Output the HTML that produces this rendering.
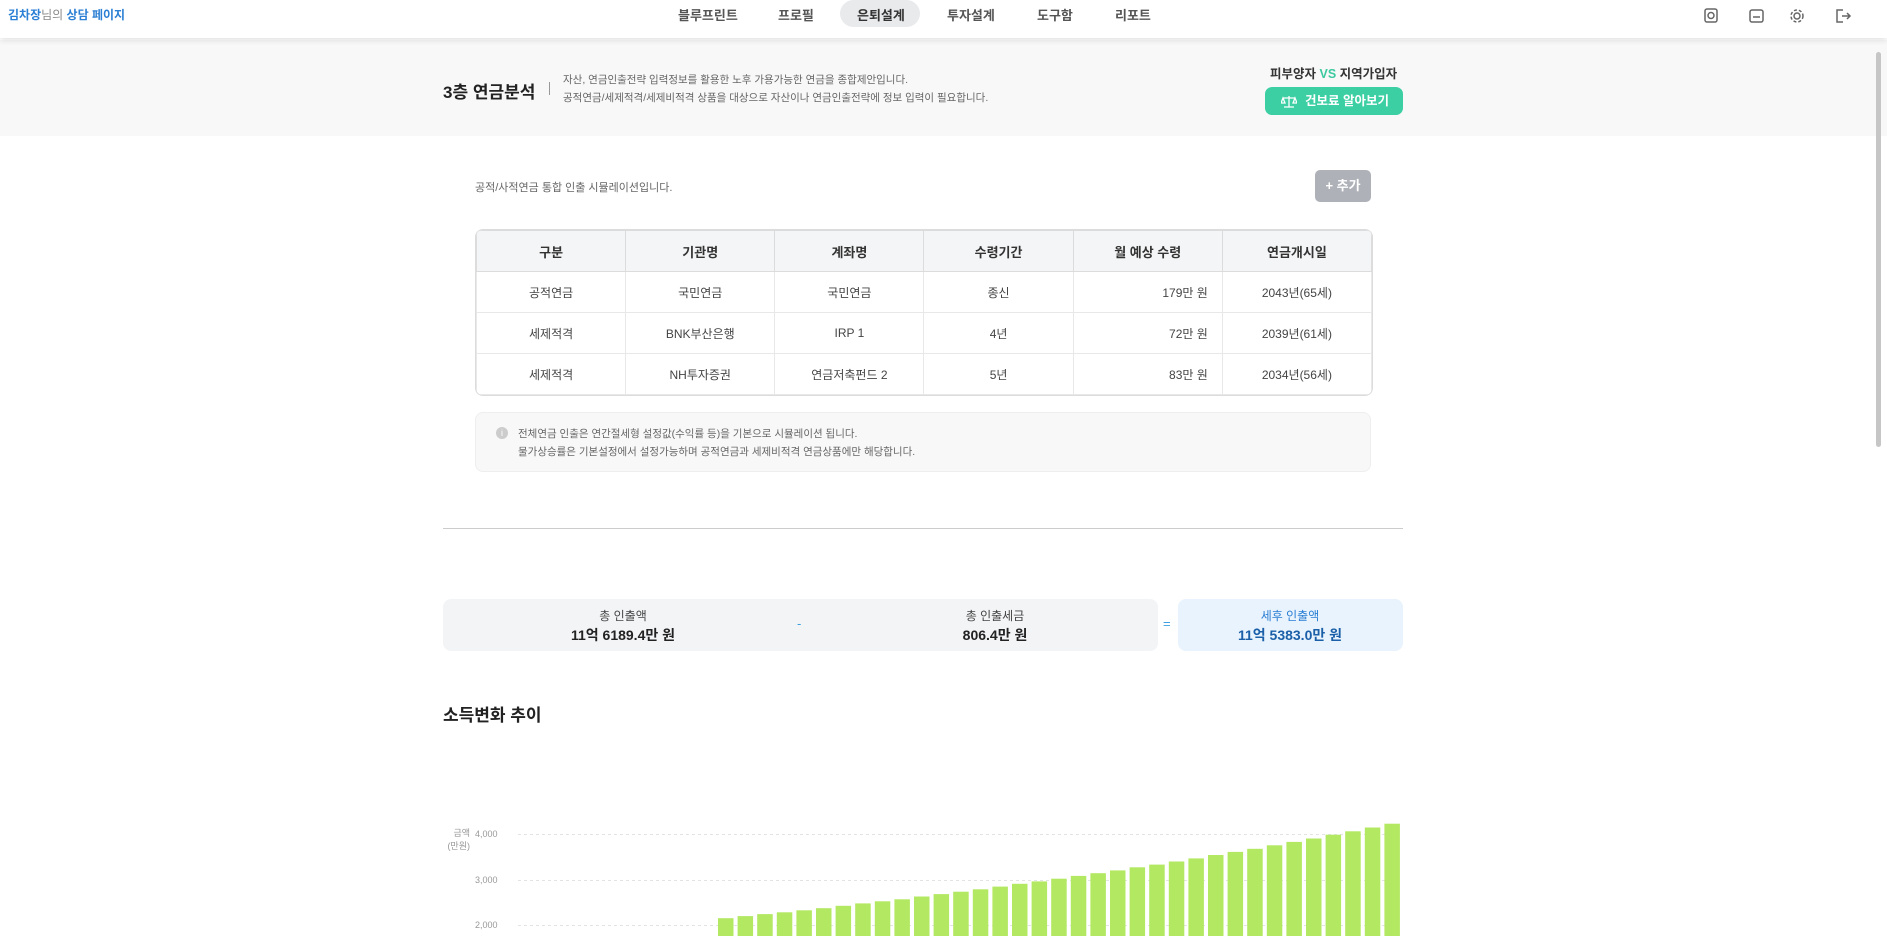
<!DOCTYPE html>
<html><head><meta charset="utf-8"><style>
*{box-sizing:border-box;margin:0;padding:0}
body{width:1887px;height:936px;overflow:hidden;background:#fff;font-family:"Liberation Sans","Noto Sans CJK KR",sans-serif;color:#333;position:relative}
.abs{position:absolute}
.hdr{left:0;top:0;width:1887px;height:38px;background:#fff;box-shadow:0 2px 6px rgba(0,0,0,.12);z-index:2}
.nav{font-size:13px;font-weight:bold;color:#555;top:5px}
.band{left:0;top:40px;width:1887px;height:96px;background:#f8f8f8}
table{border-collapse:collapse;width:896px;font-size:12px;color:#444;table-layout:fixed}
td,th{height:41px;text-align:center;border:1px solid #e8e8e8}
th{background:#f4f5f6;font-weight:bold;color:#333;font-size:13px;border-color:#dcdcdc}
td.r{text-align:right;padding-right:14px}
</style></head><body>
<div class="abs hdr">
 <div class="abs" style="left:8px;top:6px;font-size:12px;font-weight:bold;color:#2b7fd4">김차장<span style="font-weight:normal;color:#888">님의</span> 상담 페이지</div>
 <div class="abs nav" style="left:678px">블루프린트</div>
 <div class="abs nav" style="left:778px">프로필</div>
 <div class="abs" style="left:840px;top:0;width:80px;height:27px;background:#e9eaec;border-radius:14px"></div>
 <div class="abs nav" style="left:857px;color:#333">은퇴설계</div>
 <div class="abs nav" style="left:947px">투자설계</div>
 <div class="abs nav" style="left:1037px">도구함</div>
 <div class="abs nav" style="left:1115px">리포트</div>
 <svg class="abs" style="left:1703px;top:7px" width="150" height="18" fill="none" stroke="#666" stroke-width="1.5">
  <rect x="2" y="2" width="12" height="13" rx="2"/><circle cx="8" cy="8.5" r="3"/>
  <rect x="47" y="3" width="13" height="12" rx="2"/><path d="M50 10h7"/>
  <circle cx="94" cy="9" r="3"/><circle cx="94" cy="9" r="6" stroke-dasharray="3 2"/>
  <path d="M140 3h-6v12h6M139 9h8M144 6l3 3-3 3"/>
 </svg>
</div>
<div class="abs band"></div>
<div class="abs" style="left:443px;top:78px;font-size:17px;font-weight:bold;color:#222">3층 연금분석</div>
<div class="abs" style="left:549px;top:82px;width:1px;height:13px;background:#999"></div>
<div class="abs" style="left:563px;top:71px;font-size:10.5px;color:#666;line-height:18px">자산, 연금인출전략 입력정보를 활용한 노후 가용가능한 연금을 종합제안입니다.<br>공적연금/세제적격/세제비적격 상품을 대상으로 자산이나 연금인출전략에 정보 입력이 필요합니다.</div>
<div class="abs" style="left:1270px;top:63px;font-size:12.5px;font-weight:bold;color:#333">피부양자 <span style="color:#3cc9a0">VS</span> 지역가입자</div>
<div class="abs" style="left:1265px;top:87px;width:138px;height:28px;background:#3ccfa3;border-radius:7px;color:#fff;font-size:12.5px;font-weight:bold;line-height:28px;padding-left:40px">건보료 알아보기</div>
<svg class="abs" style="left:1281px;top:95px" width="16" height="13" fill="none" stroke="#fff" stroke-width="1.3"><path d="M8 1v11M3 12h10M2 3h12M2 3l-2 5h4zM14 3l-2 5h4z"/></svg>

<div class="abs" style="left:475px;top:179px;font-size:11px;color:#666">공적/사적연금 통합 인출 시뮬레이션입니다.</div>
<div class="abs" style="left:1315px;top:170px;width:56px;height:32px;background:#aeb1b7;border-radius:5px;color:#fff;font-size:13px;font-weight:bold;text-align:center;line-height:32px">+ 추가</div>

<div class="abs" style="left:475px;top:229px;border:1px solid #dcdcdc;border-radius:8px;overflow:hidden">
<table>
<tr><th>구분</th><th>기관명</th><th>계좌명</th><th>수령기간</th><th>월 예상 수령</th><th>연금개시일</th></tr>
<tr><td>공적연금</td><td>국민연금</td><td>국민연금</td><td>종신</td><td class="r">179만 원</td><td>2043년(65세)</td></tr>
<tr><td>세제적격</td><td>BNK부산은행</td><td>IRP 1</td><td>4년</td><td class="r">72만 원</td><td>2039년(61세)</td></tr>
<tr><td>세제적격</td><td>NH투자증권</td><td>연금저축펀드 2</td><td>5년</td><td class="r">83만 원</td><td>2034년(56세)</td></tr>
</table></div>

<div class="abs" style="left:475px;top:412px;width:896px;height:60px;background:#f8f8f8;border:1px solid #eee;border-radius:8px"></div>
<div class="abs" style="left:496px;top:427px;width:12px;height:12px;border-radius:50%;background:#ccc;color:#fff;font-size:9px;text-align:center;line-height:12px">i</div>
<div class="abs" style="left:518px;top:425px;font-size:10.5px;color:#666;line-height:18px">전체연금 인출은 연간절세형 설정값(수익률 등)을 기본으로 시뮬레이션 됩니다.<br>물가상승률은 기본설정에서 설정가능하며 공적연금과 세제비적격 연금상품에만 해당합니다.</div>

<div class="abs" style="left:443px;top:528px;width:960px;height:1px;background:#ccc"></div>

<div class="abs" style="left:443px;top:599px;width:715px;height:52px;background:#f3f4f6;border-radius:8px"></div>
<div class="abs" style="left:1178px;top:599px;width:225px;height:52px;background:#e8f3fd;border-radius:8px"></div>
<div class="abs" style="left:523px;top:607px;width:200px;text-align:center;font-size:12px;color:#444">총 인출액<br><b style="font-size:14px;color:#222;line-height:22px">11억 6189.4만 원</b></div>
<div class="abs" style="left:895px;top:607px;width:200px;text-align:center;font-size:12px;color:#444">총 인출세금<br><b style="font-size:14px;color:#222;line-height:22px">806.4만 원</b></div>
<div class="abs" style="left:1190px;top:607px;width:200px;text-align:center;font-size:12px;color:#2b7fd4">세후 인출액<br><b style="font-size:14px;color:#1a5fa8;line-height:22px">11억 5383.0만 원</b></div>
<div class="abs" style="left:797px;top:616px;font-size:13px;color:#3ca0e0">-</div>
<div class="abs" style="left:1163px;top:616px;font-size:13px;color:#3ca0e0">=</div>

<div class="abs" style="left:443px;top:701px;font-size:17px;font-weight:bold;color:#222">소득변화 추이</div>

<div class="abs" style="left:440px;top:827px;font-size:9px;color:#999;line-height:13px;text-align:right;width:30px;white-space:nowrap">금액<br>(만원)</div>
<div class="abs" style="left:475px;top:829px;font-size:9px;color:#999">4,000</div>
<div class="abs" style="left:475px;top:875px;font-size:9px;color:#999">3,000</div>
<div class="abs" style="left:475px;top:920px;font-size:9px;color:#999">2,000</div>
<svg class="abs" style="left:0;top:0" width="1887" height="936">
<g stroke="#e3e3e3" stroke-dasharray="3 3"><path d="M518 834.5H1400M518 880.5H1400M518 925.5H1400"/></g>
<g fill="#b3e862" id="b"></g>
</svg>
<script>
var t=[918.2,916.1,914.1,912.3,910.3,908.2,905.8,903.4,901.3,899.3,896.5,894.1,891.7,889.3,886.6,883.8,881.4,878.7,875.9,873.2,870.4,867.3,864.6,861.5,858.4,855,851.9,848.8,845.3,841.9,838.5,834.7,831.3,827.5,823.7];
var g=document.getElementById('b'),s='';
t.forEach(function(y,i){s+='<rect x="'+(718+i*19.6).toFixed(1)+'" y="'+y+'" width="15.5" height="'+(940-y)+'"/>';});
g.innerHTML=s;
</script>
<div class="abs" style="left:1876px;top:52px;width:5px;height:395px;background:#c6c6c6;border-radius:3px"></div>
</body></html>
